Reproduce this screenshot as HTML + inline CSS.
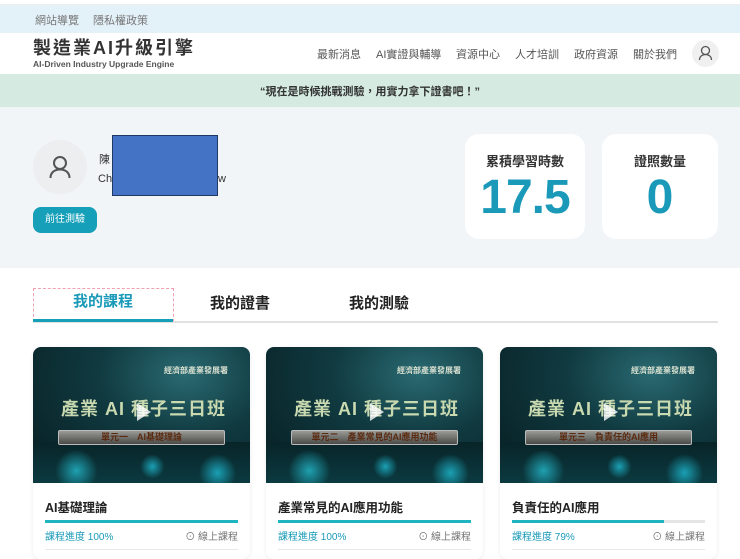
<!DOCTYPE html>
<html><head><meta charset="utf-8"><style>
*{margin:0;padding:0;box-sizing:border-box}
body{width:740px;height:559px;overflow:hidden;position:relative;background:#fff;font-family:"Liberation Sans","Noto Sans CJK TC",sans-serif;color:#222}
.a{position:absolute;white-space:nowrap}
.nav{font-size:11px;color:#555;top:46px}
.card{position:absolute;top:347px;width:217px;height:212px;background:#fff;border-radius:8px;overflow:hidden;box-shadow:0 1px 4px rgba(0,0,0,.08)}
.img{position:absolute;left:0;top:0;width:217px;height:136px;background:radial-gradient(ellipse at 70% 20%,#2a6a72 0,#103a40 40%,#061c20 100%)}
.img .glow{position:absolute;left:0;top:95px;width:217px;height:41px;background:radial-gradient(circle at 20% 70%,#1fa0b0 0,transparent 12%),radial-gradient(circle at 55% 60%,#1aa0b4 0,transparent 10%),radial-gradient(circle at 85% 75%,#1aa0b4 0,transparent 10%),linear-gradient(#082428,#0b3a40)}
.img .sub{position:absolute;right:22px;top:18px;font-size:8px;color:#d8e0d0;font-weight:bold}
.img .ttl{position:absolute;left:28px;top:52px;font-size:18px;line-height:20px;font-weight:bold;color:#c9d9b0;letter-spacing:1px}
.img .band{position:absolute;left:25px;top:83px;width:167px;height:15px;background:linear-gradient(#9a9a96,#4a4a48);border:1px solid #bbb;border-radius:2px;font-size:9px;font-weight:bold;color:#5a2a10;text-align:center;line-height:13px}
.img .play{position:absolute;left:104px;top:56px;width:0;height:0;border-left:14px solid rgba(255,255,255,.8);border-top:9px solid transparent;border-bottom:9px solid transparent}
.ct{position:absolute;left:12px;top:150px;font-size:12.5px;font-weight:bold;color:#222}
.bar{position:absolute;left:12px;top:173px;width:193px;height:3px;background:#e5e5e5}
.bar i{display:block;height:3px;background:#1fb5c0}
.pt{position:absolute;left:12px;top:181px;font-size:10px;color:#1a9ab8}
.on{position:absolute;right:12px;top:181px;font-size:10px;color:#777}
.sep{position:absolute;left:12px;top:202px;width:193px;height:1px;background:#e8e8e8}
</style></head><body>
<div class="a" style="left:0;top:0;width:740px;height:5px;background:#fff;border-bottom:1px solid #eee"></div>
<div class="a" style="left:0;top:5px;width:740px;height:28px;background:#e3f1f8"></div>
<div class="a" style="left:35px;top:12px;font-size:11px;color:#777">網站導覽</div>
<div class="a" style="left:93px;top:12px;font-size:11px;color:#777">隱私權政策</div>
<div class="a" style="left:33px;top:38px;font-size:18px;line-height:20px;font-weight:bold;color:#333;letter-spacing:2px">製造業AI升級引擎</div>
<div class="a" style="left:33px;top:59px;font-size:8.5px;line-height:11px;font-weight:bold;color:#555">AI-Driven Industry Upgrade Engine</div>
<div class="a nav" style="left:317px">最新消息</div>
<div class="a nav" style="left:376px">AI實證與輔導</div>
<div class="a nav" style="left:456px">資源中心</div>
<div class="a nav" style="left:515px">人才培訓</div>
<div class="a nav" style="left:574px">政府資源</div>
<div class="a nav" style="left:633px">關於我們</div>
<div class="a" style="left:692px;top:40px;width:27px;height:27px;border-radius:50%;background:#f0f0f0"><svg width="27" height="27" viewBox="0 0 27 27"><circle cx="13.5" cy="10.5" r="4" fill="none" stroke="#555" stroke-width="1.3"/><path d="M7.5 20c0-3.5 2.7-5.5 6-5.5s6 2 6 5.5" fill="none" stroke="#555" stroke-width="1.3"/></svg></div>
<div class="a" style="left:0;top:74px;width:740px;height:33px;background:#d5ebe2"></div>
<div class="a" style="left:0;top:83px;width:740px;text-align:center;font-size:11px;font-weight:bold;color:#333">“現在是時候挑戰測驗，用實力拿下證書吧！”</div>
<div class="a" style="left:0;top:107px;width:740px;height:161px;background:#f2f5f8"></div>
<div class="a" style="left:33px;top:140px;width:54px;height:54px;border-radius:50%;background:#eceef0"><svg width="54" height="54" viewBox="0 0 54 54"><circle cx="27" cy="23" r="6" fill="none" stroke="#555" stroke-width="2"/><path d="M17.5 38c0-5.5 4-8.5 9.5-8.5s9.5 3 9.5 8.5" fill="none" stroke="#555" stroke-width="2"/></svg></div>
<div class="a" style="left:99px;top:151px;font-size:11px;color:#333">陳</div>
<div class="a" style="left:98px;top:173px;font-size:11px;color:#333">Ch</div>
<div class="a" style="left:215px;top:173px;font-size:11px;color:#333">tw</div>
<div class="a" style="left:112px;top:135px;width:106px;height:61px;background:#4472c4;border:1px solid #1f3864"></div>
<div class="a" style="left:33px;top:207px;width:64px;height:26px;border-radius:8px;background:#159fb9;color:#fff;font-size:10px;text-align:center;line-height:26px">前往測驗</div>
<div class="a" style="left:465px;top:134px;width:120px;height:105px;background:#fff;border-radius:14px"></div>
<div class="a" style="left:602px;top:134px;width:116px;height:105px;background:#fff;border-radius:14px"></div>
<div class="a" style="left:465px;top:151px;width:120px;text-align:center;font-size:13px;font-weight:bold;color:#333">累積學習時數</div>
<div class="a" style="left:602px;top:151px;width:116px;text-align:center;font-size:13px;font-weight:bold;color:#333">證照數量</div>
<div class="a" style="left:465px;top:170px;width:120px;text-align:center;font-size:48px;font-weight:bold;color:#1a9ab8;letter-spacing:-1px">17.5</div>
<div class="a" style="left:602px;top:170px;width:116px;text-align:center;font-size:48px;font-weight:bold;color:#1a9ab8">0</div>
<div class="a" style="left:33px;top:288px;width:141px;height:34px;border:1.5px dashed #f0a0b0"></div>
<div class="a" style="left:33px;top:321px;width:685px;height:2px;background:#e2e2e2"></div>
<div class="a" style="left:33px;top:319px;width:140px;height:3px;background:#159fb9"></div>
<div class="a" style="left:33px;top:290px;width:140px;text-align:center;font-size:15px;font-weight:bold;color:#1a9ab8">我的課程</div>
<div class="a" style="left:210px;top:292px;font-size:15px;font-weight:bold;color:#222">我的證書</div>
<div class="a" style="left:349px;top:292px;font-size:15px;font-weight:bold;color:#222">我的測驗</div>

<div class="card" style="left:33px"><div class="img"><div class="glow"></div><div class="sub">經濟部產業發展署</div><div class="ttl">產業 AI 種子三日班</div><div class="band">單元一　AI基礎理論</div><div class="play"></div></div>
<div class="ct">AI基礎理論</div><div class="bar"><i style="width:100%"></i></div><div class="pt">課程進度 100%</div><div class="on">⊙ 線上課程</div><div class="sep"></div></div>
<div class="card" style="left:266px"><div class="img"><div class="glow"></div><div class="sub">經濟部產業發展署</div><div class="ttl">產業 AI 種子三日班</div><div class="band">單元二　產業常見的AI應用功能</div><div class="play"></div></div>
<div class="ct">產業常見的AI應用功能</div><div class="bar"><i style="width:100%"></i></div><div class="pt">課程進度 100%</div><div class="on">⊙ 線上課程</div><div class="sep"></div></div>
<div class="card" style="left:500px"><div class="img"><div class="glow"></div><div class="sub">經濟部產業發展署</div><div class="ttl">產業 AI 種子三日班</div><div class="band">單元三　負責任的AI應用</div><div class="play"></div></div>
<div class="ct">負責任的AI應用</div><div class="bar"><i style="width:79%"></i></div><div class="pt">課程進度 79%</div><div class="on">⊙ 線上課程</div><div class="sep"></div></div>
</body></html>
